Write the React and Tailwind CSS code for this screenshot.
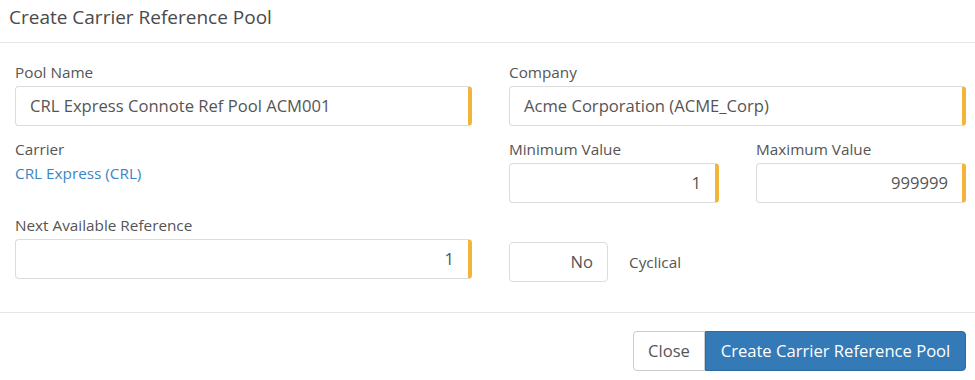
import React from "react";

const font = { fontFamily: '"Open Sans", "Liberation Sans", sans-serif' };

const Field = ({ label, value, align = "left", required = true, className = "" }) => (
  <div className={className}>
    <div className="text-[15.3px] leading-[20px] text-[#555] mb-[4px]">{label}</div>
    <div
      className={`h-[40px] flex items-center px-[14px] border border-[#dcdcdc] rounded-[4px] text-[16.6px] text-[#555] bg-white ${
        required ? "border-r-[4px] border-r-[#f2b43a]" : ""
      } ${align === "right" ? "justify-end" : ""}`}
    >
      {value}
    </div>
  </div>
);

export default function App() {
  return (
    <div className="w-[975px] h-[380px] bg-white" style={font}>
      <div className="h-[43px] border-b border-[#e5e5e5] pl-[9px] pt-[4px]">
        <h4 className="text-[19px] leading-[26px] text-[#4a4a4a]">Create Carrier Reference Pool</h4>
      </div>

      <div className="grid grid-cols-[457px_457px] gap-x-[37px] pl-[15px] pr-[9px] pt-[19px] pb-[30px] items-start">
        <div className="flex flex-col">
          <Field label="Pool Name" value="CRL Express Connote Ref Pool ACM001" />
          <div className="mt-[13px]">
            <div className="text-[15.3px] leading-[20px] text-[#555]">Carrier</div>
            <a className="block mt-[4px] text-[15.3px] leading-[20px] text-[#3a86c4]">CRL Express (CRL)</a>
          </div>
          <Field className="mt-[32px]" label="Next Available Reference" value="1" align="right" />
        </div>

        <div className="flex flex-col">
          <Field label="Company" value="Acme Corporation (ACME_Corp)" />
          <div className="mt-[13px] grid grid-cols-[210px_210px] gap-x-[37px]">
            <Field label="Minimum Value" value="1" align="right" />
            <Field label="Maximum Value" value="999999" align="right" />
          </div>
          <div className="mt-[39px] flex items-center">
            <div className="w-[99px] h-[40px] flex items-center justify-end pr-[14px] border border-[#dcdcdc] rounded-[4px] text-[16.6px] text-[#555]">
              No
            </div>
            <span className="ml-[21px] text-[15.3px] text-[#555]">Cyclical</span>
          </div>
        </div>
      </div>

      <div className="border-t border-[#e5e5e5] pt-[18px] pr-[9px] flex justify-end">
        <button className="h-[40px] w-[72px] border border-[#cccccc] rounded-l-[4px] bg-white text-[16.6px] text-[#555]">
          Close
        </button>
        <button className="h-[40px] w-[261px] rounded-r-[4px] bg-[#337ab7] border border-[#2e6da4] text-[16.6px] text-white">
          Create Carrier Reference Pool
        </button>
      </div>
    </div>
  );
}
